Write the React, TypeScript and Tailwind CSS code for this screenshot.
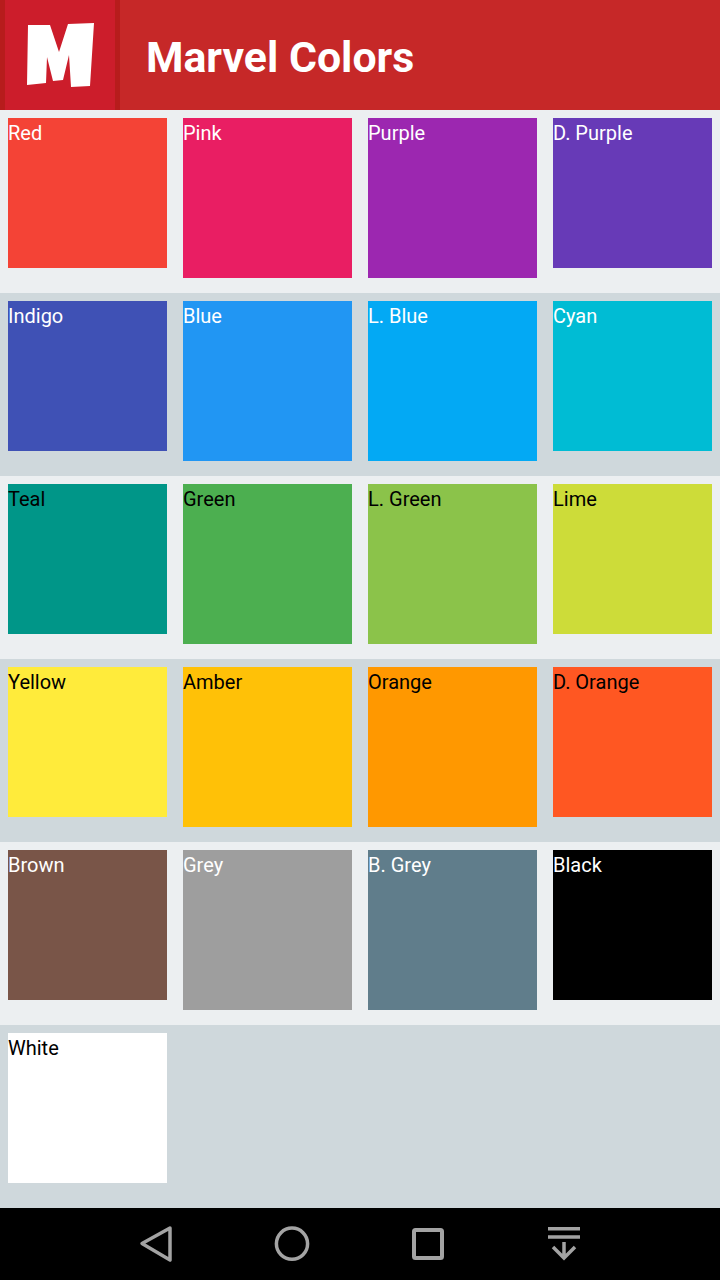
// Marvel Colors screen

const rows: { name: string; bg: string; text: string }[][] = [
  [
    { name: "Red", bg: "bg-[#f44336]", text: "text-white" },
    { name: "Pink", bg: "bg-[#e91e63]", text: "text-white" },
    { name: "Purple", bg: "bg-[#9c27b0]", text: "text-white" },
    { name: "D. Purple", bg: "bg-[#673ab7]", text: "text-white" },
  ],
  [
    { name: "Indigo", bg: "bg-[#3f51b5]", text: "text-white" },
    { name: "Blue", bg: "bg-[#2196f3]", text: "text-white" },
    { name: "L. Blue", bg: "bg-[#03a9f4]", text: "text-white" },
    { name: "Cyan", bg: "bg-[#00bcd4]", text: "text-white" },
  ],
  [
    { name: "Teal", bg: "bg-[#009688]", text: "text-black" },
    { name: "Green", bg: "bg-[#4caf50]", text: "text-black" },
    { name: "L. Green", bg: "bg-[#8bc34a]", text: "text-black" },
    { name: "Lime", bg: "bg-[#cddc39]", text: "text-black" },
  ],
  [
    { name: "Yellow", bg: "bg-[#ffeb3b]", text: "text-black" },
    { name: "Amber", bg: "bg-[#ffc107]", text: "text-black" },
    { name: "Orange", bg: "bg-[#ff9800]", text: "text-black" },
    { name: "D. Orange", bg: "bg-[#ff5722]", text: "text-black" },
  ],
  [
    { name: "Brown", bg: "bg-[#795548]", text: "text-white" },
    { name: "Grey", bg: "bg-[#9e9e9e]", text: "text-white" },
    { name: "B. Grey", bg: "bg-[#607d8b]", text: "text-white" },
    { name: "Black", bg: "bg-black", text: "text-white" },
  ],
  [{ name: "White", bg: "bg-white", text: "text-black" }],
]

function Swatch({ name, bg, text, col }: { name: string; bg: string; text: string; col: number }) {
  const size = col === 0 || col === 3 ? "w-[159px] h-[150px]" : "w-[169px] h-[160px]"
  return (
    <div className={`${size} ${bg} ${text} text-[20px] leading-[30px]`}>{name}</div>
  )
}

export default function App() {
  return (
    <div className="w-[720px] h-[1280px] flex flex-col font-['Roboto',sans-serif] overflow-hidden">
      {/* header */}
      <div className="h-[110px] bg-[#c62828] flex items-center">
        <div className="w-[120px] h-full bg-[#cc1d2b] border-x-[5px] border-[#b71c1c] flex items-center justify-center">
          <svg width="110" height="110" viewBox="0 0 110 110">
            <path
              d="M23 25L45 25L54 52L63 24L89 23L85 86L66 87L64 55L58 80L48 81L42 57L41 83L22 85Z"
              fill="#fff"
            />
          </svg>
        </div>
        <div className="ml-[26px] pt-[5px] text-white text-[42.8px] font-bold leading-none">Marvel Colors</div>
      </div>

      {/* colour rows */}
      {rows.map((row, i) => (
        <div
          key={i}
          className={`h-[183px] px-2 pt-2 flex items-start gap-4 ${i % 2 === 0 ? "bg-[#eceff1]" : "bg-[#cfd8dc]"}`}
        >
          {row.map((c, j) => (
            <Swatch key={c.name} {...c} col={j} />
          ))}
        </div>
      ))}

      {/* android nav bar */}
      <div className="h-[72px] bg-black">
        <svg width="720" height="72" viewBox="0 0 720 72" fill="none" stroke="#a3a3a3" strokeWidth="3.5">
          <path d="M170 20L142 35.500L170 52Z" strokeLinejoin="round" />
          <circle cx="292" cy="35.700" r="15.600" />
          <rect x="414" y="22" width="28" height="28" rx="1.500" strokeWidth="4" strokeLinejoin="round" />
          <path d="M548 20.700H580M548 29H580M564 34V50M553 39L564 50L575 39" strokeWidth="3.500" />
        </svg>
      </div>
    </div>
  )
}
